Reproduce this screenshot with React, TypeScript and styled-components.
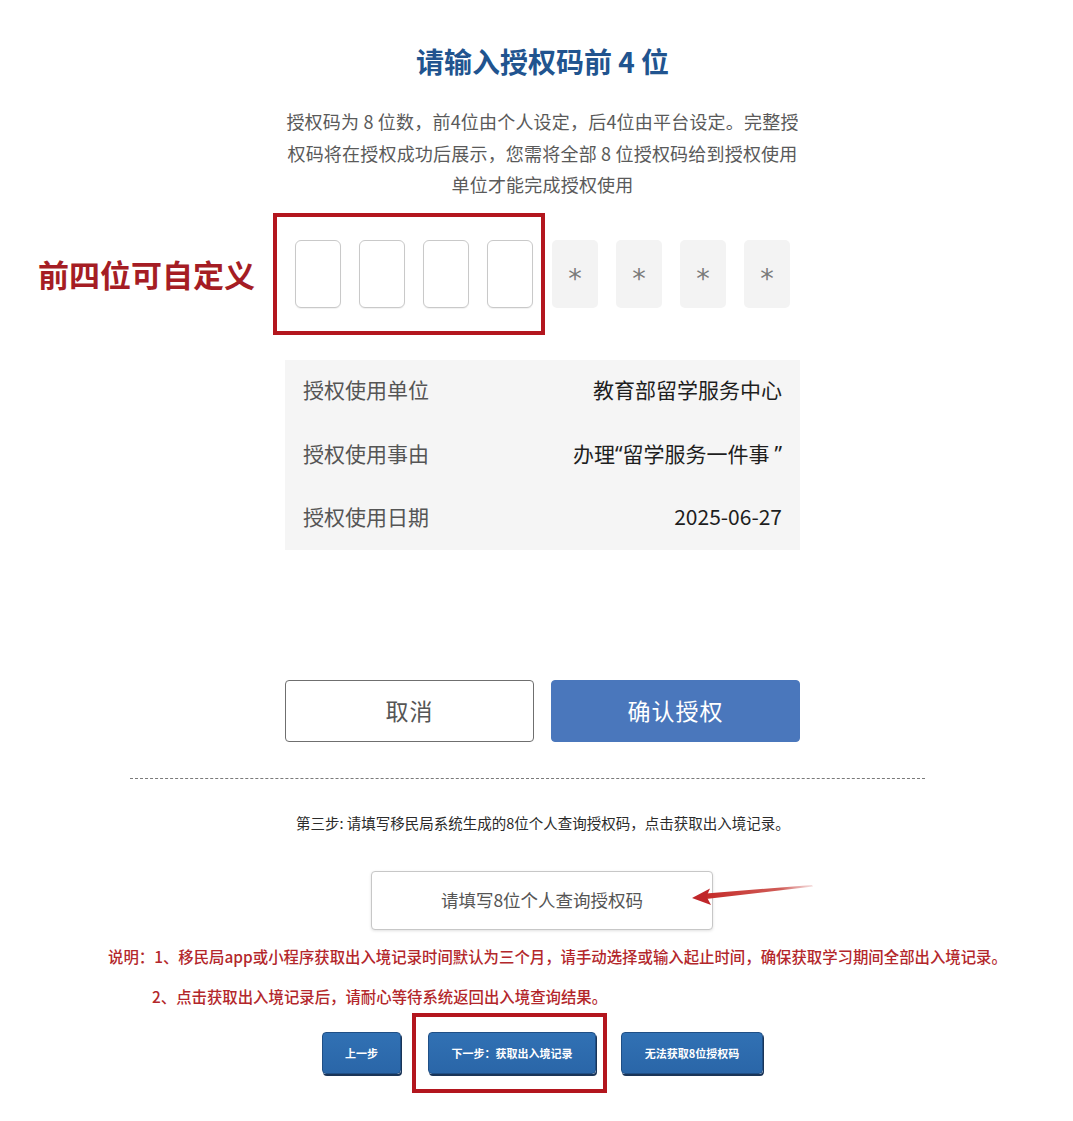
import React from "react";
import styled, { createGlobalStyle } from "styled-components";

const Global = createGlobalStyle`
  html, body { margin: 0; padding: 0; background: #ffffff; }
  body { font-family: "Noto Sans CJK SC", "Noto Sans", sans-serif; }
  * { box-sizing: border-box; }
`;

const Page = styled.div`
  width: 1073px;
  min-height: 1121px;
  padding-top: 44px;
  background: #fff;
`;

const Column = styled.div`
  width: 515px;
  margin-left: 285px;
`;

const Title = styled.h1`
  margin: 0;
  text-align: center;
  font-size: 28px;
  line-height: 34px;
  font-weight: 700;
  color: #21548f;
`;

const Intro = styled.p`
  margin: 28px 0 0;
  text-align: center;
  font-size: 18px;
  line-height: 31.5px;
  color: #5a5a5a;
  letter-spacing: 0.2px;
  white-space: nowrap;
`;

const CodeRow = styled.div`
  display: flex;
  align-items: center;
  margin: 12px 0 0 38px;
`;

const Callout = styled.span`
  font-size: 31px;
  font-weight: 700;
  color: #a51d24;
  margin-right: 18px;
  line-height: 40px;
`;

const Highlight = styled.div<{ $pad: string }>`
  display: flex;
  align-items: center;
  gap: 18px;
  border: 4px solid #b3161e;
  padding: ${(p) => p.$pad};
`;

const Digit = styled.div`
  width: 46px;
  height: 68px;
  border: 1px solid #c9c9c9;
  border-radius: 6px;
  background: #fff;
  box-shadow: 0 1px 1px rgba(0, 0, 0, 0.06);
`;

const Masked = styled.div`
  display: flex;
  gap: 18px;
  margin-left: 7px;
`;

const MaskedDigit = styled.div`
  width: 46px;
  height: 68px;
  border-radius: 5px;
  background: #f3f3f3;
  color: #7a7a7a;
  font-family: "DejaVu Sans", sans-serif;
  font-size: 27px;
  display: flex;
  align-items: center;
  justify-content: center;
  padding-top: 10px;
`;

const InfoTable = styled.div`
  margin-top: 25px;
  background: #f5f5f5;
  padding: 0 18px;
`;

const InfoRow = styled.div`
  display: flex;
  align-items: center;
  justify-content: space-between;
  height: 63.5px;
  font-size: 21px;
  padding-bottom: 4px;
`;

const InfoLabel = styled.span`
  color: #555;
`;

const InfoValue = styled.span`
  color: #1e1e1e;
`;

const Quote = styled.span<{ $gap?: number }>`
  font-family: "Noto Sans", "DejaVu Sans", sans-serif;
  margin-left: ${(p) => p.$gap || 0}px;
`;

const ActionRow = styled.div`
  display: flex;
  justify-content: space-between;
  margin-top: 130px;
`;

const ActionButton = styled.button<{ $primary?: boolean }>`
  width: 249px;
  height: 62px;
  border-radius: 4px;
  font-family: inherit;
  font-size: 23px;
  letter-spacing: 1px;
  cursor: pointer;
  padding-bottom: 3px;
  border: ${(p) => (p.$primary ? "1px solid #4a77bc" : "1px solid #6f6f6f")};
  background: ${(p) => (p.$primary ? "#4a77bc" : "#fff")};
  color: ${(p) => (p.$primary ? "#fff" : "#555")};
`;

const Divider = styled.hr`
  margin: 36px 0 0 130px;
  width: 795px;
  border: none;
  border-top: 1px dashed #7a7a7a;
  height: 0;
`;

const StepText = styled.p`
  margin: 34px 0 0 296px;
  font-size: 14.5px;
  line-height: 20px;
  color: #2b2b2b;
  white-space: nowrap;
`;

const InputWrap = styled.div`
  position: relative;
  width: 342px;
  margin: 38px 0 0 371px;
`;

const CodeInput = styled.input`
  display: block;
  width: 342px;
  height: 59px;
  border: 1px solid #c7c7c7;
  border-radius: 4px;
  box-shadow: 0 1px 3px rgba(0, 0, 0, 0.12);
  font-family: inherit;
  font-size: 17.5px;
  text-align: center;
  outline: none;
  padding-bottom: 3px;
  &::placeholder { color: #555; }
`;

const Arrow = styled.svg`
  position: absolute;
  left: 318px;
  top: 8px;
  overflow: visible;
`;

const Note = styled.div`
  margin: 6px 0 0 108px;
  color: #b3272b;
  font-size: 15.4px;
  font-weight: 500;
  line-height: 40px;
  white-space: nowrap;
`;

const NoteLine = styled.div<{ $indent?: number }>`
  padding-left: ${(p) => p.$indent || 0}px;
`;

const StepRow = styled.div`
  display: flex;
  align-items: center;
  margin: -3px 0 0 322px;
`;

const StepButton = styled.button<{ $w: number }>`
  width: ${(p) => p.$w}px;
  height: 42px;
  border-radius: 4px;
  border: 1px solid #1f4f86;
  background: linear-gradient(#3171b4, #2a66a8);
  box-shadow: 1px 2px 0 #1a3558;
  color: #fff;
  font-family: inherit;
  font-size: 11px;
  font-weight: 700;
  cursor: pointer;
`;

const StepHighlight = styled.div`
  border: 4px solid #b3161e;
  padding: 15px 7px 15px 12px;
  margin: 0 14px 0 11px;
`;

export default function App() {
  return (
    <>
      <Global />
      <Page>
        <Column>
          <Title>请输入授权码前 4 位</Title>
          <Intro>
            授权码为 8 位数，前4位由个人设定，后4位由平台设定。完整授
            <br />
            权码将在授权成功后展示，您需将全部 8 位授权码给到授权使用
            <br />
            单位才能完成授权使用
          </Intro>
        </Column>
        <CodeRow>
          <Callout>前四位可自定义</Callout>
          <Highlight $pad="23px 8px 23px 18px">
            <Digit />
            <Digit />
            <Digit />
            <Digit />
          </Highlight>
          <Masked>
            <MaskedDigit>*</MaskedDigit>
            <MaskedDigit>*</MaskedDigit>
            <MaskedDigit>*</MaskedDigit>
            <MaskedDigit>*</MaskedDigit>
          </Masked>
        </CodeRow>
        <Column>
          <InfoTable>
            <InfoRow>
              <InfoLabel>授权使用单位</InfoLabel>
              <InfoValue>教育部留学服务中心</InfoValue>
            </InfoRow>
            <InfoRow>
              <InfoLabel>授权使用事由</InfoLabel>
              <InfoValue>
                办理<Quote>“</Quote>留学服务一件事<Quote $gap={5}>”</Quote>
              </InfoValue>
            </InfoRow>
            <InfoRow>
              <InfoLabel>授权使用日期</InfoLabel>
              <InfoValue>2025-06-27</InfoValue>
            </InfoRow>
          </InfoTable>
          <ActionRow>
            <ActionButton>取消</ActionButton>
            <ActionButton $primary>确认授权</ActionButton>
          </ActionRow>
        </Column>
        <Divider />
        <StepText>第三步: 请填写移民局系统生成的8位个人查询授权码，点击获取出入境记录。</StepText>
        <InputWrap>
          <CodeInput placeholder="请填写8位个人查询授权码" />
          <Arrow width="130" height="28" viewBox="0 0 130 28">
            <defs>
              <linearGradient id="shaft" x1="0" y1="0" x2="1" y2="0">
                <stop offset="0" stopColor="#c42a28" />
                <stop offset="0.7" stopColor="#c8403a" stopOpacity="0.85" />
                <stop offset="1" stopColor="#d06060" stopOpacity="0.2" />
              </linearGradient>
            </defs>
            <polygon points="17,14.5 123,6 124,7.4 17,20" fill="url(#shaft)" />
            <polygon points="3,19 21,9.5 17.5,17.5 22,26" fill="#c0262a" />
          </Arrow>
        </InputWrap>
        <Note>
          <NoteLine>说明：1、移民局app或小程序获取出入境记录时间默认为三个月，请手动选择或输入起止时间，确保获取学习期间全部出入境记录。</NoteLine>
          <NoteLine $indent={44}>2、点击获取出入境记录后，请耐心等待系统返回出入境查询结果。</NoteLine>
        </Note>
        <StepRow>
          <StepButton $w={79}>上一步</StepButton>
          <StepHighlight>
            <StepButton $w={168}>下一步：获取出入境记录</StepButton>
          </StepHighlight>
          <StepButton $w={142}>无法获取8位授权码</StepButton>
        </StepRow>
      </Page>
    </>
  );
}
